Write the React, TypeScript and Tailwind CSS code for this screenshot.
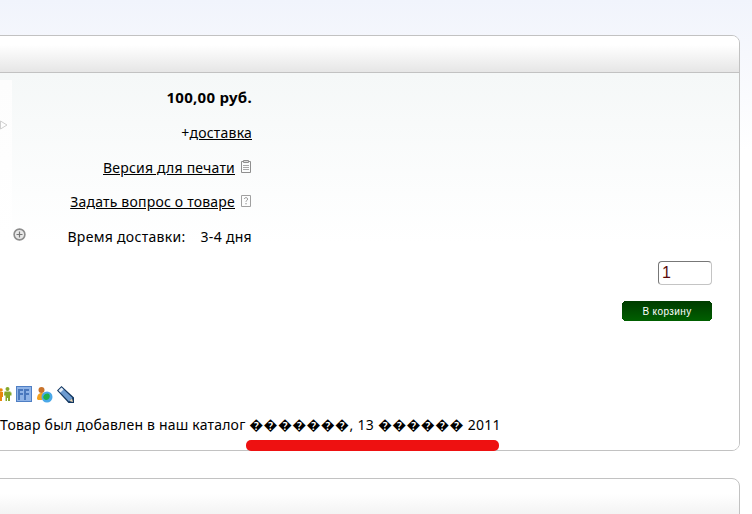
const F = { fontFamily: '"Noto Sans", "DejaVu Sans", Verdana, sans-serif' };

function PrintIcon() {
  return (
    <svg width="11" height="13" viewBox="0 0 11 13" className="ml-[6px]" fill="none" stroke="#8f8f8f" strokeWidth="1">
      <path d="M.5 1.500h9v11h-9z" />
      <path d="M2.500 .5h5v2h-5z" fill="#d8d8d8" />
      <path d="M2 5.500h6M2 7.500h6M2 9.500h6" stroke="#a8a8a8" />
    </svg>
  );
}

function HelpIcon() {
  return (
    <svg width="11" height="13" viewBox="0 0 11 13" className="ml-[6px]" fill="none">
      <path d="M.5 1.500h9v11h-9z" stroke="#a0a0a0" />
      <path d="M3.300 5c.2-1 .9-1.300 1.700-1.300 1 0 1.600.6 1.600 1.400 0 1.200-1.600 1.300-1.600 2.600M5 9v1.300" stroke="#8a8a8a" />
    </svg>
  );
}

function PlusCircle() {
  return (
    <svg width="13" height="13" viewBox="0 0 13 13" fill="none" stroke="#8c8c8c">
      <circle cx="6.500" cy="6.500" r="5.400" strokeWidth="1.600" fill="#e8e8e8" />
      <path d="M3.500 6.500h6M6.500 3.500v6" strokeWidth="1.200" stroke="#777" />
    </svg>
  );
}

function SocialIcons() {
  return (
    <div className="flex items-center gap-[4px] h-[18px] ml-[1px]">
      <svg width="12" height="16" viewBox="0 0 12 16" className="-ml-[1px]">
        <circle cx="1" cy="4" r="1.800" fill="#e8870e" />
        <path d="M-1 6h4v5H2v4H0v-4h-1z" fill="#e8870e" />
        <circle cx="7.500" cy="3" r="2" fill="#85a82a" />
        <path d="M4.500 5.500h6v1h1v3h-1.500v5.500H8V12H7v3H5.500V9.500H4z" fill="#85a82a" />
      </svg>
      <svg width="16" height="16" viewBox="0 0 16 16">
        <rect width="16" height="16" fill="#8fb3e6" />
        <rect x=".5" y=".5" width="15" height="15" fill="none" stroke="#4f7fc4" />
        <path d="M3 14V4h4M3 8h4M9 14V4h4M9 8h4" fill="none" stroke="#4a78bd" strokeWidth="2" />
      </svg>
      <svg width="17" height="17" viewBox="0 0 17 17">
        <circle cx="5.500" cy="4" r="3" fill="#c9732b" />
        <path d="M1 13c0-4 2-6 4.500-6S9 8 9 10l-3 4H2z" fill="#f3a11f" />
        <circle cx="11" cy="11" r="5.500" fill="#4aa8e8" />
        <path d="M7.500 10c2-3 5-3 6-1s-1 5-3 5-4-2-3-4z" fill="#22b04a" />
      </svg>
      <svg width="17" height="17" viewBox="0 0 17 17">
        <path d="M0 4.500 4.500 0 17 11.500V17h-5.500z" fill="#12365f" />
        <path d="M1.500 4.500 4.500 1.500 15.500 12 12 15.500z" fill="#6d9bd0" />
        <path d="M4.500 1.500 1.500 4.500 3.500 6.500 6.500 3.500z" fill="#e6eef8" />
        <path d="M12.500 15 15 12.500 16 16z" fill="#f0d9b5" />
      </svg>
    </div>
  );
}

export default function App() {
  return (
    <div
      className="w-[752px] h-[514px] overflow-hidden bg-gradient-to-b from-[#f1f4fc] to-[#ffffff] to-[150px] pt-[35px] text-black"
      style={F}
    >
      <div className="-ml-[20px] w-[760px] h-[416px] border border-[#c2c2c2] rounded-[8px] bg-white flex flex-col">
        <div className="h-[37px] shrink-0 rounded-t-[7px] border-b border-[#c2c2c2] bg-gradient-to-b from-[#ffffff] from-[25%] to-[#e6e6e6]" />
        <div className="flex-1 flex flex-col rounded-b-[7px] bg-gradient-to-b from-[#f5f8f8] to-[#ffffff] to-[45%] pr-[27px]">
          <div className="flex">
            <div className="w-[31px] h-[160px] mt-[7px] bg-gradient-to-b from-[#fdfdfd] to-[#ffffff] relative shrink-0">
              <svg width="8" height="10" viewBox="0 0 8 10" className="absolute left-[19px] top-[40px]" fill="none" stroke="#cfcfcf">
                <path d="M.5 1 7 5 .5 9z" />
              </svg>
              <div className="absolute left-[32px] top-[148px]">
                <PlusCircle />
              </div>
            </div>
            <div className="w-[240px] flex flex-col items-end text-[14px] tracking-[0.2px] leading-[16px] pt-[17px]">
              <div className="font-bold text-[15px] tracking-[0.3px] h-[35px] -mt-[1px] mb-[1px]">100,00 руб.</div>
              <div className="h-[35px]">
                +<span className="underline">доставка</span>
              </div>
              <div className="h-[34px] flex items-start">
                <span className="underline">Версия для печати</span>
                <PrintIcon />
              </div>
              <div className="h-[35px] flex items-start">
                <span className="underline">Задать вопрос о товаре</span>
                <HelpIcon />
              </div>
              <div className="flex tracking-[0.3px]">
                <span>Время доставки:</span>
                <span className="ml-[15px]">3-4 дня</span>
              </div>
            </div>
          </div>
          <div className="flex flex-col items-end mt-[16px]">
            <input
              readOnly
              value="1"
              className="w-[54px] h-[24px] border border-[#c4c4c4] border-t-[#777777] border-l-[#777777] rounded-[4px] bg-white px-[3px] text-[16px] text-[#5a0a0a] outline-none"
              style={{ fontFamily: '"Liberation Sans", Arial, sans-serif' }}
            />
            <button
              className="mt-[16px] w-[90px] h-[20px] [clip-path:polygon(2px_0,88px_0,88px_1px,89px_1px,89px_2px,90px_2px,90px_18px,89px_18px,89px_19px,88px_19px,88px_20px,2px_20px,2px_19px,1px_19px,1px_18px,0_18px,0_2px,1px_2px,1px_1px,2px_1px)] bg-gradient-to-b from-[#003c00] to-[#006000] text-white text-[10px] leading-[19px]"
              style={{ fontFamily: '"Liberation Sans", Arial, sans-serif', letterSpacing: '0.4px' }}
            >
              В корзину
            </button>
          </div>
          <div className="ml-[19px] mt-[64px]">
            <SocialIcons />
            <div className="relative mt-[14px] text-[14px] tracking-[0.2px] leading-[16px] whitespace-nowrap">
              Товар был добавлен в наш каталог <span className="tracking-[0.3px]">�������, 13 ������ 2011</span>
              <div className="absolute left-[246px] top-[23px] w-[253px] h-[11px] rounded-[5px] bg-[#ee1111]" />
            </div>
          </div>
        </div>
      </div>
      <div className="-ml-[20px] mt-[27px] w-[760px] h-[60px] border border-[#c2c2c2] rounded-[8px] bg-gradient-to-b from-[#ffffff] from-[25%] to-[#e6e6e6] to-[60px]" />
    </div>
  );
}
